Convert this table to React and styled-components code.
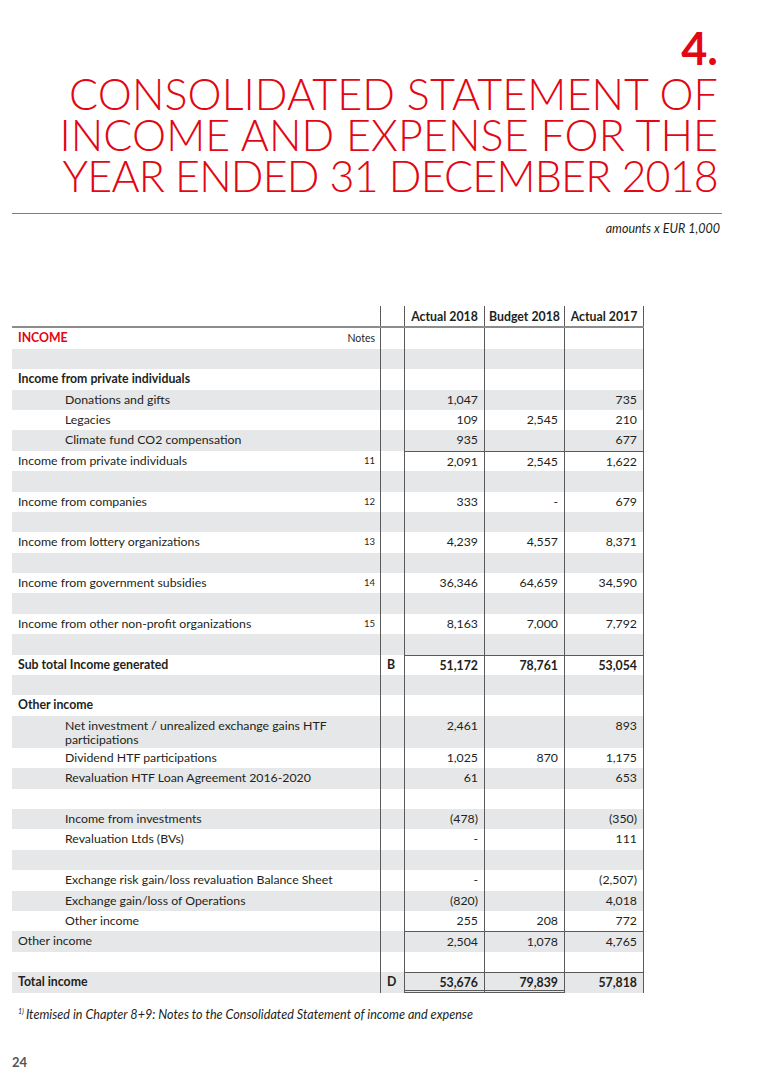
import React from "react";
import styled, { createGlobalStyle } from "styled-components";

const red = "#e30613";
const ink = "#231f20";
const shade = "#e6e7e8";
const line = "#5a5a5a";

const GlobalStyle = createGlobalStyle`
  body {
    margin: 0;
    background: #fff;
    font-family: Lato, "Open Sans", sans-serif;
    color: ${ink};
  }
`;

const Page = styled.div`
  width: 764px;
  height: 1080px;
  box-sizing: border-box;
  padding: 28px 0 0 12px;
  display: flex;
  flex-direction: column;
`;

const Heading = styled.header`
  display: flex;
  flex-direction: column;
  align-items: flex-end;
  padding-right: 46px;
  color: ${red};
`;

const ChapterNo = styled.div`
  font-size: 45px;
  font-weight: 700;
  line-height: 40px;
`;

const Title = styled.h1`
  margin: 5px 0 0;
  font-size: 43px;
  font-weight: 300;
  line-height: 41px;
  text-align: right;
`;

const TitleLine = styled.span`
  display: block;
  letter-spacing: ${(p) => (p.$tight ? "-0.8px" : "0.1px")};
`;

const RedRule = styled.hr`
  margin: 17px 42px 0 0;
  border: 0;
  border-top: 1.5px solid #e8505c;
`;

const Amounts = styled.div`
  margin: 7px 44px 0 0;
  text-align: right;
  font-style: italic;
  font-size: 12.5px;
`;

const Table = styled.div`
  width: 632px;
  margin-top: 70px;
  font-size: 12.3px;
`;

const Row = styled.div`
  display: grid;
  grid-template-columns: 333px 35px 24px 80px 80px 80px;
  height: ${(p) => (p.$tall ? "32px" : "20.4px")};
  background: ${(p) => (p.$shaded ? shade : "#fff")};
  border-bottom: ${(p) => (p.$head ? "2px solid #8c8c8c" : "0")};
`;

const Cell = styled.div`
  box-sizing: border-box;
  padding: 3px 6px 0;
  line-height: 14px;
  white-space: nowrap;
  text-align: ${(p) => p.$align || "left"};
  font-weight: ${(p) => (p.$bold ? 700 : 400)};
  border-left: ${(p) => (p.$lined ? `1px solid ${line}` : "0")};
  border-right: ${(p) => (p.$last ? `1px solid ${line}` : "0")};
  border-top: ${(p) => (p.$rule ? `1px solid ${line}` : "0")};
  border-bottom: ${(p) => (p.$double ? `3px double ${line}` : "0")};
`;

const Label = styled(Cell)`
  padding-left: ${(p) => (p.$indent ? "53px" : "6px")};
  color: ${(p) => (p.$red ? red : ink)};
`;

const Note = styled(Cell)`
  font-size: ${(p) => (p.$small ? "10.5px" : "9.5px")};
  padding: 3px 5px 0 0;
`;

const HeadCell = styled(Cell)`
  padding: 4px 0 0;
  text-align: center;
  font-weight: 700;
`;

const Footnote = styled.p`
  margin: 14px 0 0 6px;
  font-size: 12.6px;
  font-style: italic;
  sup {
    font-size: 7px;
    margin-right: 2px;
  }
`;

const PageNo = styled.div`
  margin-top: 32px;
  font-size: 13px;
  font-weight: 700;
  color: #555;
`;

const rows = [
  { label: "INCOME", red: true, bold: true, note: "Notes" },
  {},
  { label: "Income from private individuals", bold: true },
  { label: "Donations and gifts", indent: true, a: "1,047", c: "735" },
  { label: "Legacies", indent: true, a: "109", b: "2,545", c: "210" },
  { label: "Climate fund CO2 compensation", indent: true, a: "935", c: "677" },
  { label: "Income from private individuals", note: "11", rule: true, a: "2,091", b: "2,545", c: "1,622" },
  {},
  { label: "Income from companies", note: "12", a: "333", b: "-", c: "679" },
  {},
  { label: "Income from lottery organizations", note: "13", a: "4,239", b: "4,557", c: "8,371" },
  {},
  { label: "Income from government subsidies", note: "14", a: "36,346", b: "64,659", c: "34,590" },
  {},
  { label: "Income from other non-profit organizations", note: "15", a: "8,163", b: "7,000", c: "7,792" },
  {},
  { label: "Sub total Income generated", bold: true, letter: "B", rule: true, a: "51,172", b: "78,761", c: "53,054" },
  {},
  { label: "Other income", bold: true },
  { label: ["Net investment / unrealized exchange gains HTF", <br key="br" />, "participations"], indent: true, tall: true, a: "2,461", c: "893" },
  { label: "Dividend HTF participations", indent: true, a: "1,025", b: "870", c: "1,175" },
  { label: "Revaluation HTF Loan Agreement 2016-2020", indent: true, a: "61", c: "653" },
  {},
  { label: "Income from investments", indent: true, a: "(478)", c: "(350)" },
  { label: "Revaluation Ltds (BVs)", indent: true, a: "-", c: "111" },
  {},
  { label: "Exchange risk gain/loss revaluation Balance Sheet", indent: true, a: "-", c: "(2,507)" },
  { label: "Exchange gain/loss of Operations", indent: true, a: "(820)", c: "4,018" },
  { label: "Other income", indent: true, a: "255", b: "208", c: "772" },
  { label: "Other income", rule: true, a: "2,504", b: "1,078", c: "4,765" },
  {},
  { label: "Total income", bold: true, letter: "D", rule: true, double: true, a: "53,676", b: "79,839", c: "57,818" },
];

export default function App() {
  return (
    <Page>
      <GlobalStyle />
      <Heading>
        <ChapterNo>4.</ChapterNo>
        <Title>
          <TitleLine>CONSOLIDATED STATEMENT OF</TitleLine>
          <TitleLine>INCOME AND EXPENSE FOR THE</TitleLine>
          <TitleLine $tight>YEAR ENDED 31 DECEMBER 2018</TitleLine>
        </Title>
      </Heading>
      <RedRule />
      <Amounts>amounts x EUR 1,000</Amounts>

      <Table>
        <Row $head>
          <Cell />
          <Cell />
          <Cell $lined />
          <HeadCell $lined>Actual 2018</HeadCell>
          <HeadCell $lined>Budget 2018</HeadCell>
          <HeadCell $lined $last>Actual 2017</HeadCell>
        </Row>
        {rows.map((r, i) => (
          <Row key={i} $shaded={i % 2 === 1} $tall={r.tall}>
            <Label $indent={r.indent} $bold={r.bold} $red={r.red}>
              {r.label}
            </Label>
            <Note $align="right" $small={r.note === "Notes"}>
              {r.note}
            </Note>
            <Cell $lined $bold>
              {r.letter}
            </Cell>
            <Cell $lined $align="right" $bold={r.bold} $rule={r.rule} $double={r.double}>
              {r.a}
            </Cell>
            <Cell $lined $align="right" $bold={r.bold} $rule={r.rule} $double={r.double}>
              {r.b}
            </Cell>
            <Cell $lined $last $align="right" $bold={r.bold} $rule={r.rule}>
              {r.c}
            </Cell>
          </Row>
        ))}
      </Table>

      <Footnote>
        <sup>1)</sup>Itemised in Chapter 8+9: Notes to the Consolidated Statement of income and expense
      </Footnote>
      <PageNo>24</PageNo>
    </Page>
  );
}
